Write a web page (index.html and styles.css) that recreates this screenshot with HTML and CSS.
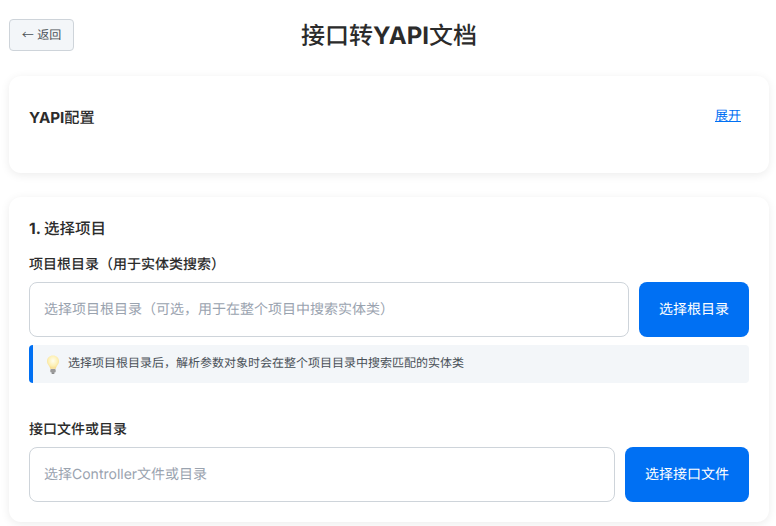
FILE: index.html
```html
<!DOCTYPE html>
<html lang="zh">
<head>
<meta charset="utf-8">
<title>接口转YAPI文档</title>
<link rel="stylesheet" href="styles.css">
</head>
<body>
<div class="page">
  <header class="header">
    <button class="back"><span class="arrow">←</span> 返回</button>
    <h1 class="title"><span class="cjk">接口转</span>YAPI<span class="cjk">文档</span></h1>
  </header>
  <section class="card config">
    <h2 class="config-title">YAPI<span class="cjk">配置</span></h2>
    <a class="toggle" href="#">展开</a>
  </section>
  <section class="card main">
    <h2 class="step-title">1. <span class="cjk">选择项目</span></h2>
    <label class="label">项目根目录（用于实体类搜索）</label>
    <div class="row">
      <input class="input" placeholder="选择项目根目录（可选，用于在整个项目中搜索实体类）">
      <button class="primary root-btn">选择根目录</button>
    </div>
    <div class="tip">
      <svg class="bulb" viewBox="0 0 16 22" width="16" height="22" aria-hidden="true">
        <defs>
          <radialGradient id="g" cx="50%" cy="40%" r="60%">
            <stop offset="0" stop-color="#fffef0"/>
            <stop offset="0.65" stop-color="#fdf0b4"/>
            <stop offset="1" stop-color="#f7d98a"/>
          </radialGradient>
        </defs>
        <path d="M8 1.500C4.400 1.500 2 4.100 2 7.300c0 2.500 1.600 3.800 2.500 5.500.4.800.5 1.400.6 2h5.800c.1-.6.2-1.200.6-2 .9-1.700 2.500-3 2.500-5.500C14 4.100 11.600 1.500 8 1.500z" fill="url(#g)"/>
        <rect x="5.300" y="15" width="5.400" height="3.400" rx="1" fill="#9a9a9a"/>
        <rect x="6.500" y="18.400" width="3" height="1.300" rx=".6" fill="#6a6a6a"/>
      </svg>
      <span class="tip-text">选择项目根目录后，解析参数对象时会在整个项目目录中搜索匹配的实体类</span>
    </div>
    <label class="label second">接口文件或目录</label>
    <div class="row">
      <input class="input" placeholder="选择Controller文件或目录">
      <button class="primary">选择接口文件</button>
    </div>
  </section>
</div>
</body>
</html>
```
FILE: styles.css
```css
* { box-sizing: border-box; }
html, body { margin: 0; padding: 0; height: 100%; overflow: hidden; background: #fff; }
body { font-family: Inter, "Noto Sans CJK SC", sans-serif; color: #2b2b2b; text-rendering: geometricPrecision; }
.page { padding: 0 7px 0 9px; }
.header { position: relative; height: 76px; padding-top: 19px; }
.back {
  display: block; width: 65px; height: 32px; padding: 0;
  background: #f3f6f9; border: 1px solid #ced4da; border-radius: 4px;
  font: 12px/1 Inter, "Noto Sans CJK SC", sans-serif; color: #495057; text-rendering: geometricPrecision;
}
.arrow { font-family: "Noto Sans CJK SC", sans-serif; }
.cjk { font-weight: 500; }
.title {
  position: absolute; left: 0; right: 0; top: 19px; margin: 0;
  text-align: center; font-size: 24px; line-height: 34px; font-weight: 700; color: #2b2b2b;
}
.card { background: #fff; border-radius: 12px; box-shadow: 0 2px 10px rgba(0,0,0,.08); padding: 20px; }
.config { height: 97px; display: flex; justify-content: space-between; align-items: flex-start; margin-bottom: 24px; padding: 29px 28px 0 20px; }
.config-title { margin: 0; font-size: 15.200px; line-height: 25px; font-weight: 700; }
.toggle { font-size: 13px; line-height: 22px; color: #0070f3; text-decoration: underline; }
.main { height: 325px; padding-top: 21px; }
.step-title { margin: 0 0 15px; font-size: 15.500px; line-height: 21px; font-weight: 700; }
.label { display: block; font-size: 14px; line-height: 22px; font-weight: 500; margin-bottom: 6px; color: #2b2b2b; }
.second { margin-top: 36px; margin-bottom: 6px; }
.row { display: flex; gap: 10px; }
.input {
  flex: 1; min-width: 0; height: 55px; padding: 0 14px;
  border: 1px solid #ced4da; border-radius: 8px; background: #fff;
  font: 14px/20px Inter, "Noto Sans CJK SC", sans-serif; color: #2b2b2b; text-rendering: geometricPrecision;
}
.input::placeholder { color: #9aa3af; opacity: 1; }
.primary {
  height: 55px; width: 124px; border: 0; border-radius: 8px; background: #0070f3; color: #fff;
  font: 14px/1 Inter, "Noto Sans CJK SC", sans-serif; padding: 0; text-rendering: geometricPrecision;
}
.root-btn { width: 110px; }
.tip {
  display: flex; align-items: center; gap: 7px; height: 38px; margin-top: 8px; padding-left: 12px;
  background: #f3f6f9; border-left: 4px solid #0070f3; border-radius: 4px;
  font-size: 12px; color: #495057;
}
.bulb { flex: none; margin-top: 2px; }
.tip-text { margin-top: -4px; }
```
